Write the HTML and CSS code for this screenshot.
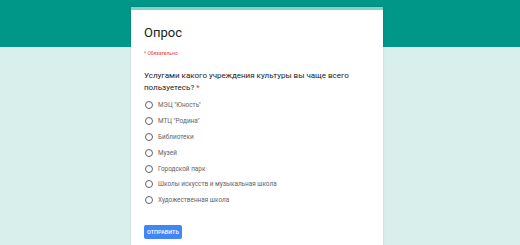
FILE: index.html
```html
<!DOCTYPE html>
<html lang="ru">

<head>
    <meta charset="UTF-8">
    <meta name="viewport" content="width=device-width, initial-scale=1.0">
    <title>Опрос</title>
    <link rel="stylesheet" href="styles.css">
</head>

<body>
    <div class="form-card">
        <h1>Опрос</h1>
        <div class="required-note">* Обязательно</div>

        <div class="question">
            <div class="question-title">Услугами какого учреждения культуры вы чаще всего пользуетесь?<span class="star">*</span></div>

            <label class="option"><span class="radio"></span>МЭЦ "Юность"</label>
            <label class="option"><span class="radio"></span>МТЦ "Родина"</label>
            <label class="option"><span class="radio"></span>Библиотеки</label>
            <label class="option"><span class="radio"></span>Музей</label>
            <label class="option"><span class="radio"></span>Городской парк</label>
            <label class="option"><span class="radio"></span>Школы искусств и музыкальная школа</label>
            <label class="option"><span class="radio"></span>Художественная школа</label>
        </div>

        <button type="button" class="submit-button">ОТПРАВИТЬ</button>
    </div>
</body>

</html>
```

FILE: styles.css
```css
html,
body {
    height: 100%;
}

body {
    margin: 0;
    font-family: 'Roboto', 'Liberation Sans', sans-serif;
    background: linear-gradient(#009688 0, #009688 47px, #d9efec 47px);
    overflow: hidden;
}

.form-card {
    width: 239px;
    margin: 7px 0 0 131px;
    padding: 0 0 20px 13px;
    background-color: white;
    border-top: 3px solid #7fd3c7;
    box-shadow: 0 0 2px rgba(0, 0, 0, 0.15);
}

h1 {
    margin: 0;
    padding-top: 15px;
    font-size: 13px;
    font-weight: 400;
    line-height: 16px;
    color: #212121;
}

.required-note {
    margin-top: 9px;
    font-size: 5px;
    line-height: 6px;
    color: #db4437;
}

.question {
    margin-top: 14px;
}

.question-title {
    width: 222px;
    font-size: 8px;
    line-height: 12px;
    color: #202124;
    margin-bottom: 3px;
}

.star {
    margin-left: 2px;
    color: #db4437;
}

.option {
    display: flex;
    align-items: center;
    height: 15.9px;
    font-size: 6.4px;
    color: #5f6368;
}

.radio {
    width: 6px;
    height: 6px;
    margin: 0 5px 0 1px;
    border: 1px solid #5f6368;
    border-radius: 50%;
}

.submit-button {
    display: block;
    margin-top: 17px;
    width: 38px;
    height: 14px;
    padding: 0;
    border: none;
    border-radius: 2px;
    background-color: #4285f4;
    color: white;
    font-family: 'Roboto', 'Liberation Sans', sans-serif;
    font-size: 5.5px;
    font-weight: 500;
}
```
